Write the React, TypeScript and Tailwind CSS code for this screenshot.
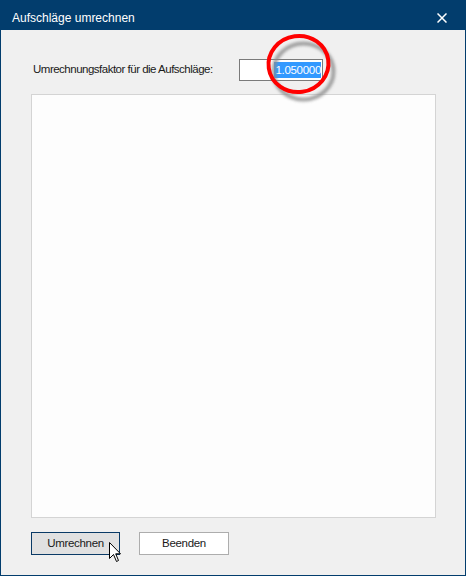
import React from "react";

const Cursor = () => (
  <svg width="13" height="21" viewBox="0 0 13 21" className="absolute left-[108px] top-[542px]">
    <path
      d="M0.5 0.5 L0.5 16.5 L4.5 12.5 L7.5 19.5 L9.5 18.5 L6.7 11.8 L11.5 11.8 Z"
      fill="#fff"
      stroke="#000"
      strokeWidth="1"
      strokeLinejoin="miter"
    />
  </svg>
);

const RedCircle = () => (
  <svg width="80" height="76" viewBox="0 0 80 76" className="absolute left-[260px] top-[32px]">
    <defs>
      <filter id="sh" x="-20%" y="-20%" width="140%" height="140%">
        <feGaussianBlur stdDeviation="1.5" />
      </filter>
    </defs>
    <ellipse cx="40" cy="36" rx="30" ry="28" fill="none" stroke="#8a8a8a" strokeWidth="4" filter="url(#sh)" transform="translate(2.5 3.5)" opacity="0.8" />
    <ellipse cx="37.5" cy="32" rx="30" ry="28" fill="none" stroke="#ff0000" strokeWidth="4" transform="rotate(-8 37.5 32)" />
  </svg>
);

export default function App() {
  return (
    <div
      className="relative w-[466px] h-[576px] flex flex-col border-x border-b border-[#023d6d] bg-[#f0f0f0] text-[11.5px] text-black"
      style={{ fontFamily: '"Liberation Sans", Arial, sans-serif' }}
    >
      <div className="h-[30px] shrink-0 bg-[#023d6d] -mx-px flex items-center justify-between pl-[12px] pr-[19px] pt-[5px]">
        <span className="text-white text-[12px]">Aufschläge umrechnen</span>
        <svg width="10" height="10" viewBox="0 0 10 10">
          <path d="M0.5 0.5 L9.5 9.5 M9.5 0.5 L0.5 9.5" stroke="#fff" strokeWidth="1.5" />
        </svg>
      </div>

      <div className="flex-1 flex flex-col pl-[30px] pr-[29px] pt-[29px]">
        <div className="flex items-center h-[22px]">
          <span className="w-[208px] pl-[2px] text-[#1a1a1a] tracking-[-0.5px] whitespace-nowrap">
            Umrechnungsfaktor für die Aufschläge:
          </span>
          <div className="w-[84px] h-[22px] border border-[#7a7a7a] bg-white flex items-center justify-end pr-[1px]">
            <span className="bg-[#3399ff] text-white leading-[16px] tracking-[-0.3px] pl-[1px]">1.050000</span>
          </div>
        </div>

        <div className="mt-[13px] h-[424px] w-[405px] border border-[#d4d4d4] bg-[#fdfdfd]" />

        <div className="mt-[14px] flex gap-[19px]">
          <div className="w-[89px] h-[23px] border border-[#0a3a66] bg-[#e1e1e1] flex items-center justify-center text-[#1a1a1a] tracking-[-0.3px]">
            Umrechnen
          </div>
          <div className="w-[90px] h-[23px] border border-[#adadad] bg-white flex items-center justify-center text-[#1a1a1a] tracking-[-0.3px]">
            Beenden
          </div>
        </div>
      </div>

      <RedCircle />
      <Cursor />
    </div>
  );
}
